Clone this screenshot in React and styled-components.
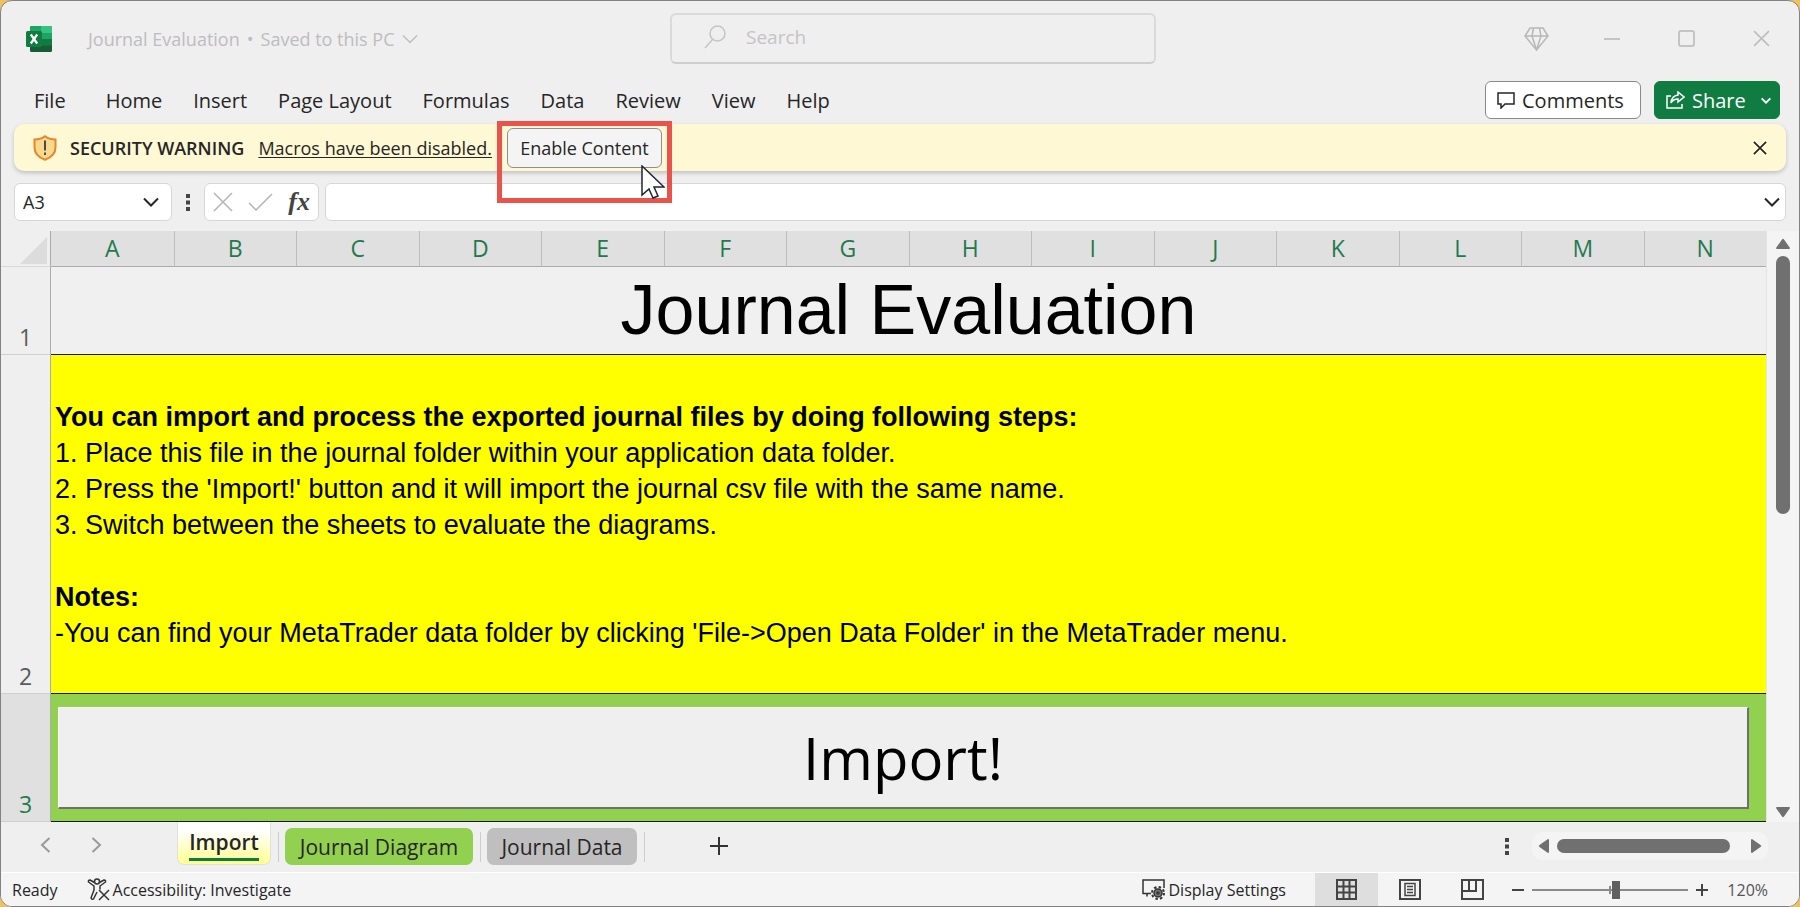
import React, { useState } from "react";
import styled, { createGlobalStyle } from "styled-components";

const Global = createGlobalStyle`
  * { box-sizing: border-box; }
  body { margin: 0; background: #edc063; }
  button, input { font: inherit; color: inherit; }
  button { cursor: pointer; }
`;

const ui = `"Open Sans", "Noto Sans", sans-serif`;
const arial = `"Liberation Sans", Arial, sans-serif`;

const Window = styled.main`
  min-height: 100vh;
  display: flex;
  flex-direction: column;
  border: 1px solid #828282;
  border-radius: 12px;
  overflow: hidden;
  background: #efefef;
  color: #262626;
  font-family: ${ui};
  font-size: 20px;
`;

const Plain = styled.button`
  display: flex;
  align-items: center;
  justify-content: center;
  padding: 0;
  border: 0;
  background: none;
`;

/* Title bar */
const TitleBar = styled.header`
  height: 77px;
  display: grid;
  grid-template-columns: 1fr 486px 1fr;
  padding: 0 25px 2px;
  color: #bdbdbd;
  font-size: 18px;
`;
const DocArea = styled.div`
  display: flex;
  align-items: center;
  gap: 36px;
  white-space: nowrap;
`;
const DocTitle = styled(Plain)`gap: 7px;`;
const SearchBox = styled.label`
  height: 51px;
  margin: 12px -13px 0 13px;
  display: flex;
  align-items: center;
  gap: 20px;
  padding: 0 0 4px 32px;
  border: 2px solid #dadada;
  border-bottom-color: #cecece;
  border-radius: 6px;
  font-size: 19px;
  input {
    flex: 1;
    min-width: 0;
    border: 0;
    padding: 0;
    background: none;
    outline: 0;
  }
  input::placeholder { color: #c4c4c4; opacity: 1; }
`;
const Caption = styled.div`
  display: flex;
  align-items: center;
  justify-content: flex-end;
  gap: 50px;
`;
const CaptionButton = styled(Plain)`
  width: 25px;
  height: 28px;
`;

/* Ribbon tabs */
const Ribbon = styled.nav`
  height: 46px;
  display: flex;
  align-items: center;
  gap: 31px;
  padding: 0 19px 2px 33px;
`;
const RibbonTab = styled(Plain)`
  &:first-child { margin-right: 9px; }
`;
const Actions = styled.div`
  margin-left: auto;
  display: flex;
  gap: 13px;
`;
const ActionButton = styled.button`
  width: ${(p) => (p.$primary ? 126 : 156)}px;
  height: 38px;
  display: flex;
  align-items: center;
  gap: 7px;
  padding: 0 8px 0 11px;
  border: 1px solid ${(p) => (p.$primary ? "#107c41" : "#8a8a8a")};
  border-radius: 6px;
  background: ${(p) => (p.$primary ? "#107c41" : "#fff")};
  color: ${(p) => (p.$primary ? "#fff" : "#262626")};
  span { flex: 1; text-align: left; }
`;

/* Message bar */
const Message = styled.section`
  height: 47px;
  margin: 0 13px;
  display: flex;
  align-items: center;
  padding: 0 19px;
  border-radius: 10px;
  background: #fef8d4;
  box-shadow: 0 2px 4px #0003;
  font-size: 18px;
  white-space: nowrap;
  strong { margin: 0 14px 0 13px; font-weight: 600; }
  a { color: inherit; text-underline-offset: 2px; }
`;
const Highlight = styled.div`
  position: relative;
  z-index: 2;
  height: 82px;
  width: 175px;
  margin: 28px 0 0 5px;
  padding: 2px 5px;
  border: 5px solid #e8534b;
`;
const EnableButton = styled.button`
  width: 100%;
  height: 40px;
  padding: 0;
  border: 1px solid #8f8f8f;
  border-radius: 6px;
  background: #f4f4f4;
`;
const Pointer = styled.svg`
  position: absolute;
  right: 2px;
  bottom: -1px;
`;
const MessageClose = styled(Plain)`margin-left: auto;`;

/* Formula bar */
const FormulaBar = styled.section`
  display: flex;
  gap: 6px;
  padding: 12px 13px 10px;
`;
const Field = styled.div`
  width: ${(p) => p.$w || "auto"};
  flex: ${(p) => (p.$grow ? 1 : "none")};
  height: 38px;
  display: flex;
  align-items: center;
  justify-content: space-between;
  padding: 0 ${(p) => p.$pad}px;
  border: 1px solid #d6d6d6;
  border-radius: 6px;
  background: #fff;
  font-size: 18px;
  input {
    flex: 1;
    min-width: 0;
    padding: 0;
    border: 0;
    outline: 0;
    background: none;
  }
`;
const NameBox = styled(Field)`padding-right: 12px;`;
const Grip = styled.div`
  width: 20px;
  display: flex;
  align-items: center;
  justify-content: center;
`;
const FxButton = styled(Plain)`
  font-family: "Liberation Serif", "Times New Roman", serif;
  font-style: italic;
  font-weight: 700;
  font-size: 26px;
  color: #444;
`;

/* Grid */
const SheetArea = styled.section`
  flex: 1;
  display: grid;
  grid-template-columns: 1fr 33px;
`;
const Sheet = styled.table`
  width: 100%;
  height: 100%;
  table-layout: fixed;
  border-collapse: separate;
  border-spacing: 0;
  th { font-weight: 400; padding: 0; font-size: 23px; }
`;
const Corner = styled.th`
  width: 50px;
  height: 36px;
  border-right: 1px solid #ababab;
  border-bottom: 1px solid #d8d8d8;
  svg { display: block; margin: 4px 0 0 19px; }
`;
const ColHead = styled.th`
  background: #e0e0e0;
  color: #1f7a4d;
  line-height: 35px;
  border-bottom: 1px solid #ababab;
  & + & { border-left: 1px solid #bdbdbd; }
`;
const RowHead = styled.th`
  height: ${(p) => p.$h}px;
  vertical-align: bottom;
  line-height: 34px;
  border-right: 1px solid #ababab;
  border-bottom: 1px solid #cfcfcf;
  background: ${(p) => (p.$active ? "#e0e0e0" : "#efefef")};
  color: ${(p) => (p.$active ? "#1f7a4d" : "#5a5a5a")};
`;
const Cell = styled.td`
  padding: 0;
  border-bottom: 1px solid #1a1a1a;
  background: ${(p) => p.$bg};
  color: #000;
  font-family: ${arial};
`;
const Heading = styled.h1`
  margin: 0;
  text-align: center;
  font-size: 70px;
  font-weight: 400;
  line-height: 87px;
`;
const Notes = styled.div`
  padding: 2px 4px 0;
  font-size: 27px;
  line-height: 36px;
  p { margin: 0; }
  p.gap { margin-top: 36px; }
`;
const ImportButton = styled.button`
  display: block;
  width: calc(100% - 24px);
  height: 102px;
  margin: 0 0 0 7px;
  padding: 2px 0 0;
  border: solid;
  border-width: 1px 2px 2px 1px;
  border-color: #fff #6f6f6f #6f6f6f #fff;
  background: #efefef;
  font-family: ${ui};
  font-size: 58px;
  line-height: 80px;
`;

/* Scroll bars */
const VScroll = styled.div`
  display: flex;
  flex-direction: column;
  align-items: center;
  gap: 7px;
  padding: 7px 0 4px;
  border-left: 1px solid #e3e3e3;
  background: #f4f4f4;
`;
const VTrack = styled.div`
  flex: 1;
  width: 14px;
`;
const VThumb = styled.div`
  height: 258px;
  border-radius: 7px;
  background: #707070;
`;
const HScroll = styled.div`
  width: 236px;
  height: 28px;
  display: flex;
  align-items: center;
  gap: 8px;
  padding: 0 6px;
  border-radius: 10px;
  background: #f4f4f4;
`;
const HTrack = styled.div`
  flex: 1;
`;
const HThumb = styled.div`
  width: 93%;
  height: 14px;
  border-radius: 7px;
  background: #707070;
`;

/* Sheet tabs */
const TabBar = styled.nav`
  height: 51px;
  display: flex;
  align-items: flex-start;
  padding: 0 31px 0 39px;
  border-bottom: 1px solid #fff;
  font-size: 21px;
`;
const Arrows = styled.div`
  height: 46px;
  width: 137px;
  display: flex;
  gap: 40px;
`;
const SheetTab = styled.button`
  width: ${(p) => p.$w}px;
  height: 37px;
  margin-top: 6px;
  padding: 0;
  border: 0;
  border-radius: 7px;
  background: ${(p) => p.$bg};
  line-height: 36px;
  white-space: nowrap;
`;
const ActiveTab = styled.button`
  width: 94px;
  height: 43px;
  padding: 0;
  border: 1px solid #e0e0e0;
  border-top: 0;
  border-radius: 0 0 7px 7px;
  background: linear-gradient(#fff 20%, #ffff8f);
  font-weight: 600;
  line-height: 32px;
  span { display: inline-block; border-bottom: 3px solid #107c41; }
`;
const Divider = styled.span`
  width: 1px;
  height: 30px;
  margin: 10px 6px 0 7px;
  background: #cdcdcd;
`;
const TabTools = styled.div`
  height: 48px;
  margin-left: auto;
  display: flex;
  align-items: center;
  gap: 23px;
`;
const AddSheet = styled(Plain)`
  height: 48px;
  margin-left: 59px;
`;

/* Status bar */
const Status = styled.footer`
  height: 33px;
  display: flex;
  align-items: stretch;
  padding: 0 31px 0 11px;
  background: #f4f4f4;
  font-size: 16px;
`;
const StatusItem = styled(Plain)`
  gap: 3px;
  margin-right: ${(p) => p.$after || 0}px;
  white-space: nowrap;
`;
const Spacer = styled.div`flex: 1;`;
const ViewButton = styled(Plain)`
  width: 63px;
  background: ${(p) => (p.$on ? "#dedede" : "none")};
`;
const Zoom = styled.div`
  display: flex;
  align-items: center;
  gap: 8px;
  margin-left: 8px;
  color: #555;
`;
const Slider = styled.input`
  appearance: none;
  width: 156px;
  height: 18px;
  margin: 0;
  background: linear-gradient(#8a8a8a, #8a8a8a) center / 100% 2px no-repeat,
    linear-gradient(#8a8a8a, #8a8a8a) 50% 50% / 2px 8px no-repeat;
  &::-webkit-slider-thumb {
    appearance: none;
    width: 8px;
    height: 18px;
    background: #606060;
  }
`;
const ZoomValue = styled.output`
  width: 52px;
  text-align: right;
`;

const Chevron = ({ w = 16, stroke = 2 }) => (
  <svg width={w} height={w / 2 + 2} viewBox="0 0 16 10" fill="none" stroke="currentColor" strokeWidth={stroke}>
    <path d="M1 1.5l7 7 7-7" />
  </svg>
);
const Cross = ({ s = 16, stroke = 2 }) => (
  <svg width={s} height={s} viewBox="0 0 16 16" fill="none" stroke="currentColor" strokeWidth={stroke}>
    <path d="M1 1l14 14M15 1L1 15" />
  </svg>
);
const Dots = () => (
  <svg width="4" height="17" viewBox="0 0 4 17" fill="#444">
    <path d="M0 0h4v4H0zM0 6.500h4v4H0zM0 13h4v4H0z" />
  </svg>
);
const Triangle = ({ dir }) => {
  const d = {
    up: "M6 1.500Q7 0 8 1.500L14 10Q14 11 13 11H1Q0 11 0 10z",
    down: "M6 9.500Q7 11 8 9.500L14 1Q14 0 13 0H1Q0 0 0 1z",
    left: "M1.500 6Q0 7 1.500 8L10 14Q11 14 11 13V1Q11 0 10 0z",
    right: "M9.500 6Q11 7 9.500 8L1 14Q0 14 0 13V1Q0 0 1 0z",
  }[dir];
  const tall = dir === "left" || dir === "right";
  return (
    <svg width={tall ? 11 : 14} height={tall ? 14 : 11} fill="#707070">
      <path d={d} />
    </svg>
  );
};
const Angle = ({ d }) => (
  <svg width="11" height="16" viewBox="0 0 11 16" fill="none" stroke="#9a9a9a" strokeWidth="2">
    <path d={d} />
  </svg>
);
const ExcelLogo = () => (
  <svg width="26" height="26" viewBox="0 0 26 26">
    <rect x="4" y="0" width="22" height="26" rx="1.500" fill="#185c37" />
    <path d="M5.500 0H15v7H4V1.500Q4 0 5.500 0z" fill="#21a366" />
    <path d="M15 0h9.500Q26 0 26 1.500V7H15z" fill="#33c481" />
    <path d="M4 7h11v6H4z" fill="#107c41" />
    <path d="M15 7h11v6H15z" fill="#21a366" />
    <path d="M15 13h11v6.500H15z" fill="#107c41" />
    <rect x="0" y="5" width="16" height="16" rx="1.500" fill="#107c41" />
    <path d="M4.800 8.500l6.400 9M11.200 8.500l-6.400 9" stroke="#fff" strokeWidth="2.200" />
  </svg>
);
const Shield = () => (
  <svg width="24" height="26" viewBox="0 0 24 26">
    <path
      d="M12 1.200C9 3.600 6 4.300 1.500 4.500V12c0 6 4 10.500 10.500 12.800C18.500 22.500 22.500 18 22.500 12V4.500C18 4.300 15 3.600 12 1.200z"
      fill="#f8d98e"
      stroke="#e8862c"
      strokeWidth="2"
    />
    <path d="M12 5.500v10M12 17.500v2.500" stroke="#4a4a4a" strokeWidth="2" />
  </svg>
);

const COLUMNS = "ABCDEFGHIJKLMN".split("");
const MENU = ["File", "Home", "Insert", "Page Layout", "Formulas", "Data", "Review", "View", "Help"];

export default function App() {
  const [zoom, setZoom] = useState(54);
  return (
    <>
      <Global />
      <Window>
        <TitleBar>
          <DocArea>
            <ExcelLogo />
            <DocTitle>
              <span>Journal Evaluation</span>
              <span>•</span>
              <span>Saved to this PC</span>
              <Chevron stroke={1.5} />
            </DocTitle>
          </DocArea>
          <SearchBox>
            <svg width="22" height="24" viewBox="0 0 22 24" fill="none" stroke="#c4c4c4" strokeWidth="1.500">
              <circle cx="13.500" cy="8.500" r="7.500" />
              <path d="M8.500 14.500L1 23" />
            </svg>
            <input aria-label="Search" placeholder="Search" />
          </SearchBox>
          <Caption>
            <CaptionButton aria-label="Premium">
              <svg width="25" height="24" viewBox="0 0 25 24" fill="none" stroke="#b8b8b8" strokeWidth="1.500">
                <path d="M6 1h13l5 8-11.500 14L1 9zM1 9h23M9.500 1L8 9l4.500 14L17 9l-1.500-8" />
              </svg>
            </CaptionButton>
            <CaptionButton aria-label="Minimize">
              <svg width="16" height="2" fill="#c4c4c4"><rect width="16" height="2" /></svg>
            </CaptionButton>
            <CaptionButton aria-label="Maximize">
              <svg width="17" height="17" fill="none" stroke="#c4c4c4" strokeWidth="2">
                <rect x="1" y="1" width="15" height="15" rx="2" />
              </svg>
            </CaptionButton>
            <CaptionButton aria-label="Close"><Cross s={17} stroke={1.5} /></CaptionButton>
          </Caption>
        </TitleBar>

        <Ribbon aria-label="Ribbon">
          {MENU.map((m) => <RibbonTab key={m}>{m}</RibbonTab>)}
          <Actions>
            <ActionButton>
              <svg width="18" height="17" viewBox="0 0 18 17" fill="none" stroke="currentColor" strokeWidth="1.500">
                <path d="M1 1h16v11H8l-4 4v-4H1z" />
              </svg>
              <span>Comments</span>
            </ActionButton>
            <ActionButton $primary>
              <svg width="19" height="18" viewBox="0 0 19 18" fill="none" stroke="currentColor" strokeWidth="1.500">
                <path d="M5 5H1v12h15v-4M12 1l6 5-6 5V8Q7 8 5 12 5.500 5 12 4z" />
              </svg>
              <span>Share</span>
              <Chevron w={10} stroke={3} />
            </ActionButton>
          </Actions>
        </Ribbon>

        <Message>
          <Shield />
          <strong>SECURITY WARNING</strong>
          <a href="#macros">Macros have been disabled.</a>
          <Highlight>
            <EnableButton>Enable Content</EnableButton>
            <Pointer width="24" height="34" viewBox="0 0 24 34" fill="#fff" stroke="#222238" strokeWidth="1.500">
              <path d="M1 1v29l7-6 4 9 5-2-4-9h10z" />
            </Pointer>
          </Highlight>
          <MessageClose aria-label="Close message"><Cross s={14} /></MessageClose>
        </Message>

        <FormulaBar>
          <NameBox $w="158px" $pad={8}>
            <input aria-label="Name box" defaultValue="A3" />
            <Plain aria-label="Open name list"><Chevron /></Plain>
          </NameBox>
          <Grip><Dots /></Grip>
          <Field $w="115px" $pad={8}>
            <Plain aria-label="Cancel"><svg width="20" height="20" fill="none" stroke="#b4b4b4" strokeWidth="1.500"><path d="M1 1l18 18M19 1L1 19" /></svg></Plain>
            <Plain aria-label="Enter"><svg width="25" height="18" fill="none" stroke="#b4b4b4" strokeWidth="1.500"><path d="M1 10l7 7L24 1" /></svg></Plain>
            <FxButton aria-label="Insert function">fx</FxButton>
          </Field>
          <Field $grow $pad={5}>
            <input aria-label="Formula" />
            <Plain aria-label="Expand formula bar"><Chevron /></Plain>
          </Field>
        </FormulaBar>

        <SheetArea>
          <Sheet>
            <thead>
              <tr>
                <Corner aria-label="Select all">
                  <svg width="27" height="27" fill="#dcdcdc"><path d="M27 0v27H0z" /></svg>
                </Corner>
                {COLUMNS.map((c) => <ColHead key={c} scope="col">{c}</ColHead>)}
              </tr>
            </thead>
            <tbody>
              <tr>
                <RowHead scope="row" $h={88}>1</RowHead>
                <Cell colSpan={14} $bg="#f0f0f0"><Heading>Journal Evaluation</Heading></Cell>
              </tr>
              <tr>
                <RowHead scope="row" $h={339}>2</RowHead>
                <Cell colSpan={14} $bg="#ffff00">
                  <Notes>
                    <p><b>You can import and process the exported journal files by doing following steps:</b></p>
                    <p>1. Place this file in the journal folder within your application data folder.</p>
                    <p>2. Press the 'Import!' button and it will import the journal csv file with the same name.</p>
                    <p>3. Switch between the sheets to evaluate the diagrams.</p>
                    <p className="gap"><b>Notes:</b></p>
                    <p>-You can find your MetaTrader data folder by clicking 'File-&gt;Open Data Folder' in the MetaTrader menu.</p>
                  </Notes>
                </Cell>
              </tr>
              <tr>
                <RowHead scope="row" $h={128} $active>3</RowHead>
                <Cell colSpan={14} $bg="#92d050"><ImportButton>Import!</ImportButton></Cell>
              </tr>
            </tbody>
          </Sheet>
          <VScroll>
            <Triangle dir="up" />
            <VTrack><VThumb /></VTrack>
            <Triangle dir="down" />
          </VScroll>
        </SheetArea>

        <TabBar aria-label="Sheets">
          <Arrows>
            <Plain aria-label="Previous sheet"><Angle d="M9.500 1L2 8l7.500 7" /></Plain>
            <Plain aria-label="Next sheet"><Angle d="M1.500 1L9 8l-7.500 7" /></Plain>
          </Arrows>
          <ActiveTab><span>Import</span></ActiveTab>
          <Divider />
          <SheetTab $w={188} $bg="#92d050">Journal Diagram</SheetTab>
          <Divider />
          <SheetTab $w={150} $bg="#bfbfbf">Journal Data</SheetTab>
          <Divider />
          <AddSheet aria-label="New sheet">
            <svg width="18" height="18" fill="#333"><path d="M8 0h2v18H8zM0 8h18v2H0z" /></svg>
          </AddSheet>
          <TabTools>
            <Dots />
            <HScroll>
              <Triangle dir="left" />
              <HTrack><HThumb /></HTrack>
              <Triangle dir="right" />
            </HScroll>
          </TabTools>
        </TabBar>

        <Status>
          <StatusItem as="span" $after={29}>Ready</StatusItem>
          <StatusItem>
            <svg width="23" height="23" viewBox="0 0 23 23" fill="none" stroke="#333" strokeWidth="1.500" strokeLinejoin="round">
              <circle cx="10" cy="3.500" r="2.500" />
              <path d="M7.500 4.500L3 2Q1 2 1.500 4L7 8v4L4 20q1 2 2.500 1L10 14M12.500 4.500L17 2q2 0 1.500 2L13 8v3.500" />
              <path d="M12 12l10 10M22 12L12 22" />
            </svg>
            Accessibility: Investigate
          </StatusItem>
          <Spacer />
          <StatusItem $after={29}>
            <svg width="24" height="22" viewBox="0 0 24 22" fill="none" stroke="#333" strokeWidth="1.500">
              <path d="M9 14.500H1V1h21v8M5 14.500v3" />
              <circle cx="16" cy="14" r="4" fill="#777" />
              <circle cx="16" cy="14" r="6" strokeDasharray="2.500 2.200" strokeWidth="2" />
              <circle cx="16" cy="14" r="1" fill="#fff" />
            </svg>
            Display Settings
          </StatusItem>
          <ViewButton $on aria-label="Normal view">
            <svg width="21" height="21" fill="none" stroke="#444" strokeWidth="2">
              <path d="M1 1h19v19H1zM7.500 1v19M13.500 1v19M1 7.500h19M1 13.500h19" />
            </svg>
          </ViewButton>
          <ViewButton aria-label="Page layout view">
            <svg width="22" height="21" fill="none" stroke="#444" strokeWidth="2">
              <path d="M1 1h20v19H1z" />
              <path d="M6 4.500h10v12H6zM8 7.500h6M8 10.500h6M8 13.500h6" strokeWidth="1.500" />
            </svg>
          </ViewButton>
          <ViewButton aria-label="Page break preview">
            <svg width="23" height="21" fill="none" stroke="#444" strokeWidth="2">
              <path d="M1 1h21v19H1zM1 12h14V1M8 1v11" />
            </svg>
          </ViewButton>
          <Zoom>
            <Plain aria-label="Zoom out"><svg width="12" height="12" fill="#444"><path d="M0 5h12v2H0z" /></svg></Plain>
            <Slider type="range" aria-label="Zoom" value={zoom} onChange={(e) => setZoom(e.target.value)} />
            <Plain aria-label="Zoom in"><svg width="12" height="12" fill="#444"><path d="M0 5h12v2H0zM5 0h2v12H5z" /></svg></Plain>
            <ZoomValue>120%</ZoomValue>
          </Zoom>
        </Status>
      </Window>
    </>
  );
}
